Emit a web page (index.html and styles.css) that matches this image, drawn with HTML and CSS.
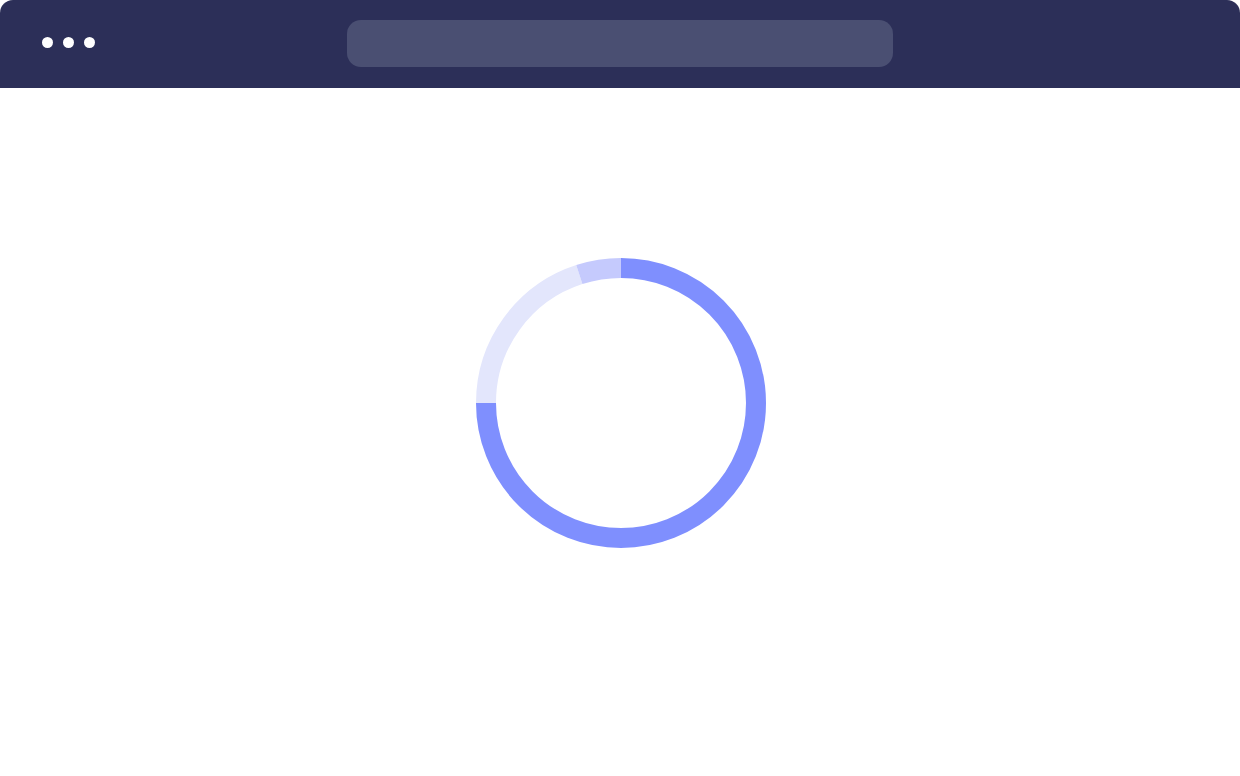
FILE: index.html
```html
<!DOCTYPE html>
<html>
<head>
    <meta charset="utf-8">
    <title>Loading</title>
    <link rel="stylesheet" href="styles.css">
</head>
<body>
    <div class="window">
        <div class="topbar">
            <div class="dots">
                <span class="dot"></span>
                <span class="dot"></span>
                <span class="dot"></span>
            </div>
            <div class="urlbar"></div>
            <div></div>
        </div>

        <div class="content">
            <svg class="loader" width="290" height="290" viewBox="0 0 290 290">
                <g transform="rotate(-90 145 145)">
                    <circle class="seg seg-main" cx="145" cy="145" r="135" pathLength="100"></circle>
                    <circle class="seg seg-light" cx="145" cy="145" r="135" pathLength="100"></circle>
                    <circle class="seg seg-mid" cx="145" cy="145" r="135" pathLength="100"></circle>
                </g>
            </svg>
        </div>
    </div>
</body>
</html>
```
FILE: styles.css
```css
body,html{
    margin: 0;
    padding: 0;
    height: 100%;
    background-color: #ffffff;
    font-family: "Liberation Sans", Arial, sans-serif;
}
.window{
    height: 100%;
    display: flex;
    flex-direction: column;
}
.topbar{
    height: 88px;
    background-color: #2c2f58;
    border-radius: 13px 13px 0 0;
    display: grid;
    grid-template-columns: 1fr 546px 1fr;
    align-items: center;
}
.dots{
    display: flex;
    gap: 10px;
    padding-left: 42px;
    margin-top: -3px;
}
.dot{
    width: 11px;
    height: 11px;
    border-radius: 50%;
    background-color: #ffffff;
}
.urlbar{
    height: 47px;
    border-radius: 14px;
    background-color: #4a4f72;
    margin-top: -1px;
}
.content{
    flex: 1;
    display: flex;
    justify-content: center;
    align-items: flex-start;
    padding-top: 170px;
    padding-left: 1px;
}
.seg{
    fill: none;
    stroke-width: 20;
}
.seg-main{
    stroke: #7f8ffe;
    stroke-dasharray: 75 25;
}
.seg-light{
    stroke: #e3e6fc;
    stroke-dasharray: 20 80;
    stroke-dashoffset: -75;
}
.seg-mid{
    stroke: #c5cafd;
    stroke-dasharray: 5 95;
    stroke-dashoffset: -95;
}
```
